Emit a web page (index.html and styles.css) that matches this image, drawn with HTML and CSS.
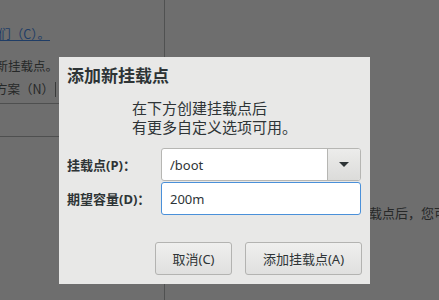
FILE: index.html
```html
<!DOCTYPE html>
<html lang="zh-CN">
<head>
    <meta charset="UTF-8">
    <meta name="viewport" content="width=device-width, initial-scale=1.0">
    <title>添加新挂载点</title>
    <link rel="stylesheet" href="styles.css">
</head>
<body>
    <div class="page">
        <div class="side">
            <div class="line first"><a class="link">点击这里自动创建它们（C）。</a></div>
            <div class="line second">通过点击“+”按钮创建新挂载点。</div>
            <div class="line third">新挂载点将使用以下分区方案（N）<span class="combo-edge"></span></div>
            <div class="band"></div>
        </div>
        <div class="detail">
            <p>在下方创建挂载点后，您可在这里浏览它们的详细信息。</p>
        </div>
    </div>

    <div class="dialog">
        <h1>添加新挂载点</h1>
        <p class="hint">在下方创建挂载点后<br>有更多自定义选项可用。</p>

        <div class="form">
            <label for="mountPoint">挂载点(<u>P</u>)：</label>
            <div class="combo">
                <input type="text" id="mountPoint" value="/boot">
                <span class="combo-btn"><span class="arrow"></span></span>
            </div>

            <label for="capacity">期望容量(<u>D</u>)：</label>
            <input type="text" id="capacity" class="entry" value="200m">
        </div>

        <div class="buttons">
            <button class="btn cancel">取消(C)</button>
            <button class="btn add">添加挂载点(A)</button>
        </div>
    </div>
</body>
</html>
```

FILE: styles.css
```css
body {
    margin: 0;
    width: 439px;
    height: 300px;
    overflow: hidden;
    position: relative;
    background-color: #6e6e6e;
    font-family: "Noto Sans CJK SC", sans-serif;
    color: #262828;
}
.page {
    display: flex;
    height: 300px;
}
.side {
    width: 165px;
    flex-shrink: 0;
    border-right: 1px solid #505151;
    padding-top: 24px;
    box-sizing: border-box;
}
.line {
    display: flex;
    justify-content: flex-end;
    width: 50px;
    white-space: nowrap;
    font-size: 12.5px;
    line-height: 20px;
}
.line.second {
    margin-top: 12px;
    width: 58px;
}
.line.third {
    margin-top: 3px;
    width: 56px;
    align-items: center;
}
.link {
    color: #1f3d66;
    text-decoration: underline;
}
.combo-edge {
    display: inline-block;
    height: 15px;
    margin-left: 1px;
    border-left: 1px solid #3a3b3b;
}
.band {
    margin-top: 4px;
    height: 32px;
    border-top: 1px solid #4e4f4f;
    border-bottom: 1px solid #4e4f4f;
}
.detail {
    flex: 1;
    min-width: 0;
    overflow: hidden;
    padding-left: 126px;
    padding-top: 203px;
    white-space: nowrap;
    font-size: 13px;
    line-height: 20px;
}
.detail p {
    margin: 0;
}

/* dialog */
.dialog {
    position: absolute;
    left: 59px;
    top: 57px;
    width: 311px;
    height: 227px;
    box-sizing: border-box;
    padding: 9px 8px 9px 8px;
    background-color: #e8e8e7;
    color: #2e3436;
    display: flex;
    flex-direction: column;
    font-family: "Noto Sans", "Noto Sans CJK SC", sans-serif;
}
.dialog h1 {
    margin: 0;
    font-size: 17px;
    line-height: 19px;
    font-weight: bold;
}
.hint {
    margin: 14px 0 0 65px;
    font-size: 15px;
    line-height: 19px;
}
.form {
    margin-top: 11px;
    display: grid;
    grid-template-columns: 94px 200px;
    row-gap: 1px;
    align-items: center;
}
.form label {
    font-size: 13px;
    font-weight: bold;
}
.form label u {
    text-decoration: none;
}
.combo {
    display: flex;
    height: 33px;
    border: 1px solid #b6b6b3;
    border-radius: 3px;
    box-sizing: border-box;
    background-color: white;
    overflow: hidden;
}
.combo input {
    flex: 1;
    min-width: 0;
    border: none;
    outline: none;
    padding: 0 8px;
    font-family: "Noto Sans", sans-serif;
    font-size: 13px;
    color: #2e3436;
    background: transparent;
}
.combo-btn {
    width: 32px;
    border-left: 1px solid #b6b6b3;
    background: linear-gradient(#ececeb, #dcdcda);
    display: flex;
    align-items: center;
    justify-content: center;
}
.arrow {
    width: 0;
    height: 0;
    border-left: 5px solid transparent;
    border-right: 5px solid transparent;
    border-top: 5px solid #2e3436;
}
.entry {
    height: 33px;
    box-sizing: border-box;
    border: 1px solid #4a90d9;
    border-radius: 3px;
    padding: 0 8px;
    outline: none;
    font-family: "Noto Sans", sans-serif;
    font-size: 13px;
    color: #2e3436;
    background-color: white;
    width: 200px;
}
.buttons {
    margin-top: auto;
    display: flex;
    justify-content: flex-end;
    gap: 13px;
}
.btn {
    height: 33px;
    border: 1px solid #b3b3b1;
    border-radius: 3px;
    background: linear-gradient(#efefee, #e0e0df);
    font-family: "Noto Sans", "Noto Sans CJK SC", sans-serif;
    font-size: 13px;
    color: #2e3436;
    padding: 0;
}
.cancel {
    width: 77px;
}
.add {
    width: 117px;
}
```
